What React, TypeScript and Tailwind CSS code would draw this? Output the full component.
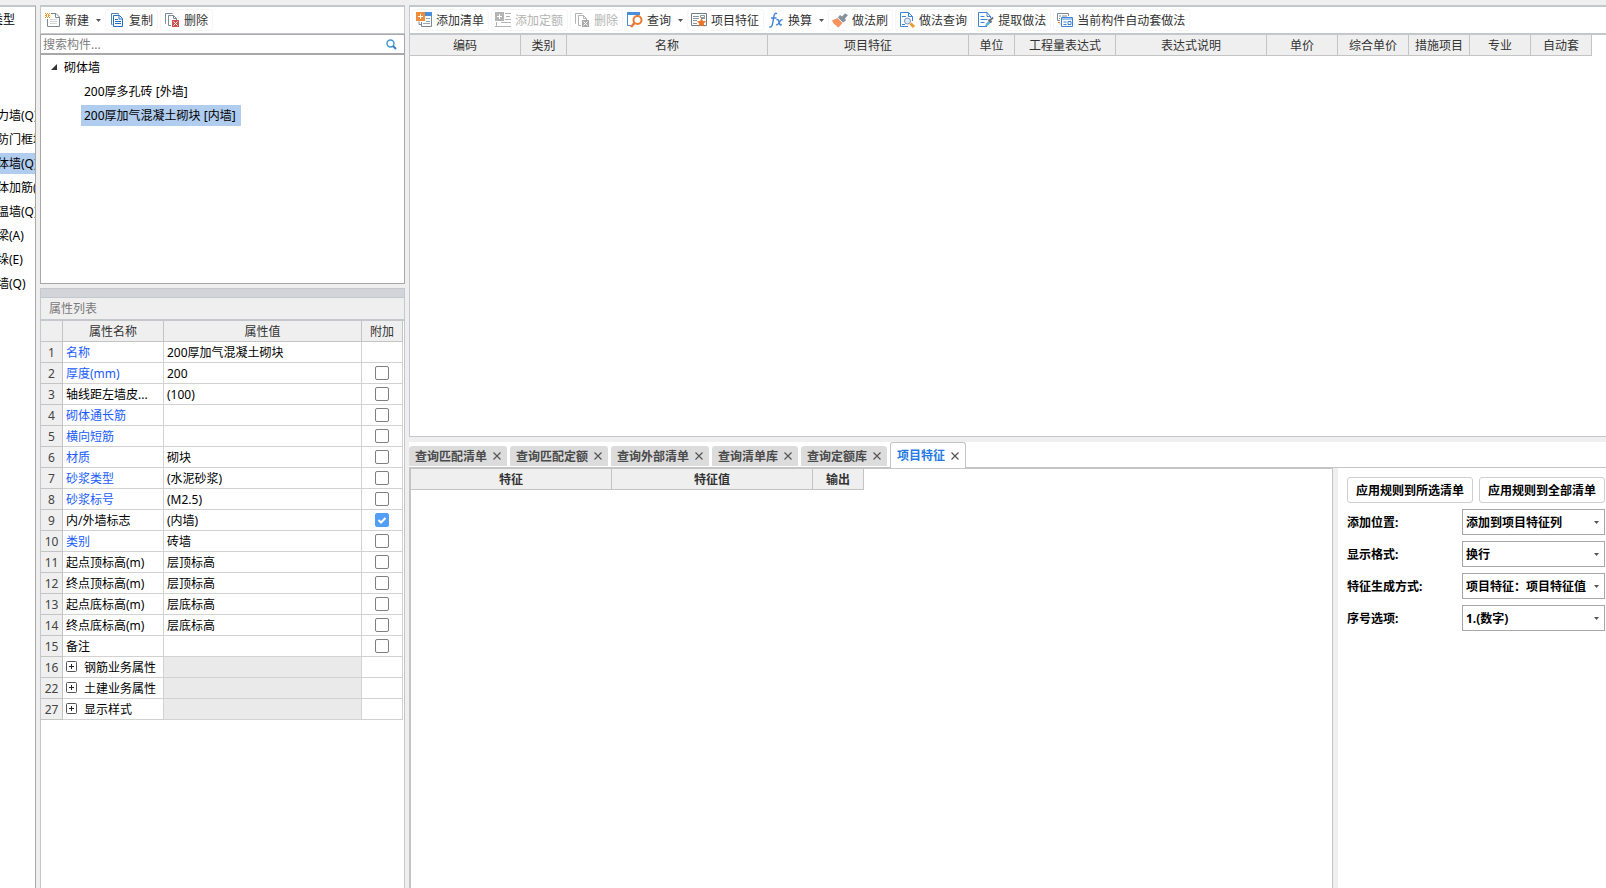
import { useState, type ReactNode } from "react";

const componentTypes = [
  "剪力墙(Q)",
  "人防门框墙(RF)",
  "砌体墙(Q)",
  "砌体加筋(Y)",
  "保温墙(Q)",
  "暗梁(A)",
  "墙垛(E)",
  "幕墙(Q)",
];

type Property = {
  no: number;
  name: string;
  value?: string;
  blue?: boolean;
  group?: boolean;
};

const properties: Property[] = [
  { no: 1, name: "名称", value: "200厚加气混凝土砌块", blue: true },
  { no: 2, name: "厚度(mm)", value: "200", blue: true },
  { no: 3, name: "轴线距左墙皮...", value: "(100)" },
  { no: 4, name: "砌体通长筋", blue: true },
  { no: 5, name: "横向短筋", blue: true },
  { no: 6, name: "材质", value: "砌块", blue: true },
  { no: 7, name: "砂浆类型", value: "(水泥砂浆)", blue: true },
  { no: 8, name: "砂浆标号", value: "(M2.5)", blue: true },
  { no: 9, name: "内/外墙标志", value: "(内墙)" },
  { no: 10, name: "类别", value: "砖墙", blue: true },
  { no: 11, name: "起点顶标高(m)", value: "层顶标高" },
  { no: 12, name: "终点顶标高(m)", value: "层顶标高" },
  { no: 13, name: "起点底标高(m)", value: "层底标高" },
  { no: 14, name: "终点底标高(m)", value: "层底标高" },
  { no: 15, name: "备注" },
  { no: 16, name: "钢筋业务属性", group: true },
  { no: 22, name: "土建业务属性", group: true },
  { no: 27, name: "显示样式", group: true },
];

const listColumns = [
  { title: "编码", width: "w-[111px]" },
  { title: "类别", width: "w-[46px]" },
  { title: "名称", width: "w-[201px]" },
  { title: "项目特征", width: "w-[201px]" },
  { title: "单位", width: "w-[46px]" },
  { title: "工程量表达式", width: "w-[101px]" },
  { title: "表达式说明", width: "w-[151px]" },
  { title: "单价", width: "w-[71px]" },
  { title: "综合单价", width: "w-[71px]" },
  { title: "措施项目", width: "w-[61px]" },
  { title: "专业", width: "w-[61px]" },
  { title: "自动套", width: "w-[61px]" },
];

const tabs = ["查询匹配清单", "查询匹配定额", "查询外部清单", "查询清单库", "查询定额库", "项目特征"];

const options = [
  { id: "position", label: "添加位置:", value: "添加到项目特征列" },
  { id: "format", label: "显示格式:", value: "换行" },
  { id: "mode", label: "特征生成方式:", value: "项目特征：项目特征值" },
  { id: "serial", label: "序号选项:", value: "1.(数字)" },
];

function Icon({ children }: { children: ReactNode }) {
  return (
    <svg className="h-4 w-4 shrink-0" viewBox="0 0 16 16" fill="none" aria-hidden="true">
      {children}
    </svg>
  );
}

function NewIcon() {
  return (
    <Icon>
      <path d="M6 1.500h5l3.500 3.500v9.500h-12V7" stroke="#7d8a94" />
      <path d="M10.500 1.500V5.500h4" stroke="#7d8a94" />
      <path d="M5 7.500h7M5 9.500h7M5 11.500h7" stroke="#cfd4d8" />
      <path d="M0 1h1v1H0zM2 1h1v1H2zM4 1h1v1H4zM1 2h1v1H1zM3 2h1v1H3zM0 3h2v1H0zM3 3h2v1H3zM1 4h1v1H1zM3 4h1v1H3zM0 5h1v1H0zM2 5h1v1H2zM4 5h1v1H4z" fill="#f0962e" />
    </Icon>
  );
}

function CopyIcon() {
  return (
    <Icon>
      <path d="M3.500 12.500H2.500V1.500H9.500V2.500" stroke="#5b7fa8" />
      <path d="M4.500 3.500H10.500L13.500 6.500V14.500H4.500Z" stroke="#2273c8" />
      <path d="M10 3.500V7H13.500" stroke="#2273c8" />
      <path d="M6 7.500h3M6 9.500h6M6 11.500h6" stroke="#2273c8" />
    </Icon>
  );
}

function DeleteIcon({ muted }: { muted?: boolean }) {
  const line = muted ? "#b4b4b4" : "#7d8a94";
  return (
    <Icon>
      <path d="M2 11.500H1.500V1.500H8.500" stroke={line} />
      <path d="M7 13.500H4.500V3.500H9.500L12.500 6.500V8" stroke={line} />
      <path d="M9.500 3.500V6.500H12.500" stroke={line} />
      <path d="M8 8h7v7H8z" fill={muted ? "#aaaaaa" : "#d2504e"} />
      <path d="M9.500 9.500l4 4M13.500 9.500l-4 4" stroke="#fff" />
    </Icon>
  );
}

function AddListIcon() {
  return (
    <Icon>
      <path d="M9 2.500h6.500v12H5.500V10" stroke="#7d8a94" />
      <path d="M3 9.500v3H5" stroke="#7d8a94" />
      <path d="M9 0h7v4H9z" fill="#4a8edb" />
      <path d="M10 6.500h4M10 9.500h4M7 11.500h7" stroke="#9aa6ae" />
      <path d="M0 0h9v9H0z" fill="#ec8d3c" />
      <path d="M4.500 2v5M2 4.500h5" stroke="#fff" />
    </Icon>
  );
}

function AddQuotaIcon() {
  return (
    <Icon>
      <path d="M10 1.500h6M11 4.500h4M10 7.500h6M6 10.500h10M0 14.500h16M1.500 10v4" stroke="#b4b4b4" />
      <path d="M0 0h9v9H0z" fill="#b4b4b4" />
      <path d="M4.500 2v5M2 4.500h5" stroke="#fff" />
    </Icon>
  );
}

function QueryIcon() {
  return (
    <Icon>
      <path d="M0.500 3v10.500H4" stroke="#4a8edb" />
      <path d="M0 0h13v3H0z" fill="#4a8edb" />
      <circle cx="10.500" cy="8" r="4" stroke="#ec7a33" strokeWidth="2" fill="#fff" />
      <path d="M7.500 11L4 15" stroke="#ec7a33" strokeWidth="2.500" />
    </Icon>
  );
}

function FeatureIcon() {
  return (
    <Icon>
      <path d="M0.500 1.500h15v12H0.500z" stroke="#6f7d87" />
      <path d="M2 4.500h6M2 6.500h6M2 8.500h4M2 11.500h4M10 6.500h4" stroke="#8b979f" />
      <path d="M9.500 3.500h4v2h-4z" stroke="#8b979f" />
      <path d="M10.500 6l1.400 2.900 3.300.3-2.400 2.200.7 3.400-3-1.700-3 1.700.7-3.400-2.400-2.200 3.300-.3z" fill="#ec7428" />
    </Icon>
  );
}

function FormulaIcon() {
  return (
    <Icon>
      <path d="M9 1.600C7.200.6 6.300 2 6 3.800L4.500 12C4.200 14.200 3 15.500 1.200 14.700M3 6h5.500" stroke="#3f84d6" strokeWidth="1.400" />
      <path d="M8.500 8c1.500-1 2-.2 2.500 2s1.100 3.800 2.800 2.400M14.500 8c-1-.8-1.800 0-3 2.200S9.200 13.400 8 12.600" stroke="#3f84d6" strokeWidth="1.400" />
    </Icon>
  );
}

function BrushIcon() {
  return (
    <Icon>
      <path d="M0 8.500l5.500-2.500 5 5-4 4.500c-1.200-.5-2-1.200-2.600-2.200C2.300 12.300.8 10.800 0 8.500z" fill="#f6935f" />
      <path d="M6 5.500l2-2.500 2 1.500L13 1.500 16 3l-3 3.500 1 2L11 10.500z" fill="#85929b" />
    </Icon>
  );
}

function MethodQueryIcon() {
  return (
    <Icon>
      <path d="M9.500.5H1.500V14.500H9M9.500.5L13.500 4.500V9M9.500.5V4.500H13.500" stroke="#3f84d6" />
      <path d="M3 4.500h4M3 12.500h3" stroke="#3f84d6" />
      <circle cx="8.500" cy="9" r="3" stroke="#7b96b4" fill="#dcecfb" />
      <path d="M11.500 11.500l3.500 3.500" stroke="#ee9a2f" strokeWidth="3" />
    </Icon>
  );
}

function ExtractIcon() {
  return (
    <Icon>
      <path d="M9 14.500H.5V.5H9L12.500 4.500V6M9 .5V4.500H12.500" stroke="#3f84d6" />
      <path d="M2.500 4.500h4M2.500 7.500h7M2.500 10.500h4" stroke="#3f84d6" />
      <path d="M7 14.500l1-3 3.500-3.500 2 2-3.500 3.500z" fill="#63b1d8" />
      <path d="M10.500 7.500l3 3M12 8.500L15 5.500" stroke="#66737d" strokeWidth="1.800" />
    </Icon>
  );
}

function AutoIcon() {
  return (
    <Icon>
      <path d="M3 8.500H.5V1.500H11.500V4M2 4h2M5 4h5M2 6.500h1" stroke="#7d8a94" />
      <path d="M1 10.500h2M2.500 12h1" stroke="#ec7a33" />
      <path d="M4.500 5.500h11v9h-11z" stroke="#3f84d6" fill="#fff" />
      <path d="M5 6h10v2H5z" fill="#9dc4ef" />
      <path d="M6.500 10h3M6.500 12.500h3M11 9.500h3v3h-3z" stroke="#3f84d6" />
    </Icon>
  );
}

function DownArrow() {
  return (
    <svg className="h-[3px] w-[5px] shrink-0" viewBox="0 0 5 3" aria-hidden="true">
      <path d="M0 0h5L2.500 3z" fill="#555" />
    </svg>
  );
}

type ToolProps = {
  icon: ReactNode;
  label: string;
  disabled?: boolean;
  menu?: boolean;
};

function Tool({ icon, label, disabled, menu }: ToolProps) {
  return (
    <button
      type="button"
      disabled={disabled}
      className={
        "flex h-[22px] shrink-0 items-center gap-1 whitespace-nowrap rounded-[3px] border leading-[18px] " +
        (menu ? "border-transparent pl-px pr-px " : "border-[#f6f6f6] pl-[3px] pr-1 ") +
        (disabled ? "text-[#b4b4b4]" : "text-[#333]")
      }
    >
      {icon}
      <span className="pt-0.5">{label}</span>
      {menu && (
        <span className="pl-[3px]">
          <DownArrow />
        </span>
      )}
    </button>
  );
}

function TypeList() {
  return (
    <nav className="w-9 shrink-0 overflow-hidden border-r border-t-2 border-r-[#a8a8a8] border-t-[#c4c8cc] bg-white">
      <div className="-ml-[15px] w-28 whitespace-nowrap">
        <h2 className="mb-[71px] h-[26px] pl-1.5 leading-[26px]">类型</h2>
        <ul>
          {componentTypes.map((type) => (
            <li key={type} className="h-6 pt-px">
              <a
                href="#"
                className={"block h-[21px] leading-[21px] " + (type === "砌体墙(Q)" ? "bg-[#b0ccee]" : "")}
              >
                {type}
              </a>
            </li>
          ))}
        </ul>
      </div>
    </nav>
  );
}

function ComponentTree() {
  return (
    <section className="flex flex-col">
      <div className="flex h-[27px] items-center gap-[2px] border-x border-b border-[#c4c8cc] bg-white pl-[2px]">
        <Tool icon={<NewIcon />} label="新建" menu />
        <Tool icon={<CopyIcon />} label="复制" />
        <Tool icon={<DeleteIcon />} label="删除" />
      </div>
      <div className="flex h-5 items-center border border-[#a8a8a8] bg-white pr-[7px]">
        <input
          type="text"
          aria-label="搜索构件"
          placeholder="搜索构件..."
          className="h-[18px] min-w-0 flex-1 pl-0.5 outline-none placeholder:text-[#808080]"
        />
        <button type="button" aria-label="搜索">
          <svg className="h-[11px] w-[11px]" viewBox="0 0 11 11" fill="none">
            <circle cx="4.500" cy="4.500" r="3.500" stroke="#3a97cf" strokeWidth="1.400" />
            <path d="M7 7l3 3" stroke="#3a7fbf" strokeWidth="2" />
          </svg>
        </button>
      </div>
      <div className="h-[230px] border border-[#a8a8a8] bg-white pt-px leading-[21px]">
        <div className="mb-0.5 flex h-[22px] items-center pl-[10px]">
          <svg className="h-[6px] w-[6px]" viewBox="0 0 6 6" aria-hidden="true">
            <path d="M6 0v6H0z" fill="#333" />
          </svg>
          <span className="pl-[7px]">砌体墙</span>
        </div>
        <ul className="pl-10">
          <li className="h-6 pt-px">
            <button type="button" className="h-[21px] pl-[3px] pr-[5px]">200厚多孔砖 [外墙]</button>
          </li>
          <li className="h-6 pt-px">
            <button type="button" className="h-[21px] bg-[#b0ccee] pl-[3px] pr-[5px]">200厚加气混凝土砌块 [内墙]</button>
          </li>
        </ul>
      </div>
    </section>
  );
}

function PropertyTable() {
  const [checked, setChecked] = useState<number[]>([9]);

  const toggle = (no: number) => {
    setChecked(checked.includes(no) ? checked.filter((n) => n !== no) : [...checked, no]);
  };

  const head = "h-[21px] border-b border-r border-[#c4c4c4] bg-[#efefef] p-0 pt-0.5 font-normal text-[#333]";
  const cell = "h-[21px] border-b border-r border-[#d2d2d2] p-0 pl-[3px] pt-0.5";

  return (
    <section className="mt-1 flex flex-1 flex-col border-x border-[#c4c8cc] bg-white">
      <div className="h-[10px] border-y border-[#c4c8cc] bg-[#d2d4da]" />
      <h2 className="h-[23px] border-b-2 border-[#c4c8cc] bg-[#efefef] pl-2 leading-[21px] text-[#7a7a7a]">
        属性列表
      </h2>
      <div className="flex-1">
        <table className="w-[362px] table-fixed border-separate border-spacing-0 leading-[18px]">
          <thead>
            <tr>
              <th className={head + " w-[22px]"} />
              <th className={head + " w-[101px]"}>属性名称</th>
              <th className={head + " w-[198px]"}>属性值</th>
              <th className={head + " w-[41px]"}>附加</th>
            </tr>
          </thead>
          <tbody>
            {properties.map((p) => (
              <tr key={p.no}>
                <td className="h-[21px] border-b border-r border-[#c4c4c4] bg-[#efefef] p-0 pt-0.5 text-center text-[#444]">
                  {p.no}
                </td>
                <td className={cell + (p.blue ? " text-[#1a5cff]" : "")}>
                  {p.group ? (
                    <button type="button" className="flex h-[18px] items-start gap-[7px]">
                      <svg className="mt-0.5 h-[11px] w-[11px]" viewBox="0 0 11 11" fill="none" aria-hidden="true">
                        <rect x="0.500" y="0.500" width="10" height="10" rx="1" stroke="#555" />
                        <path d="M3 5.500h5M5.500 3v5" stroke="#222" />
                      </svg>
                      {p.name}
                    </button>
                  ) : (
                    p.name
                  )}
                </td>
                <td className={cell + (p.group ? " bg-[#eaeaea]" : "")}>{p.value}</td>
                <td className="h-[21px] border-b border-r border-[#d2d2d2] p-0">
                  {p.no > 1 && !p.group && (
                    <label className="grid place-items-center">
                      <input
                        type="checkbox"
                        aria-label={p.name}
                        checked={checked.includes(p.no)}
                        onChange={() => toggle(p.no)}
                        className="peer col-start-1 row-start-1 h-[14px] w-[14px] appearance-none rounded-[2px] border border-[#7f7f7f] bg-white checked:border-[#539ff7] checked:bg-[#539ff7]"
                      />
                      <svg
                        className="col-start-1 row-start-1 hidden h-[14px] w-[14px] peer-checked:block"
                        viewBox="0 0 14 14"
                        fill="none"
                      >
                        <path d="M3.500 7l2.500 2.500L10.500 5" stroke="#fff" strokeWidth="2" />
                      </svg>
                    </label>
                  )}
                </td>
              </tr>
            ))}
          </tbody>
        </table>
      </div>
    </section>
  );
}

function BillPanel() {
  return (
    <section className="flex h-[432px] shrink-0 flex-col overflow-hidden border-b border-l border-t-2 border-[#c4c8cc] bg-white">
      <div className="flex h-7 shrink-0 items-center gap-[2px] border-b-2 border-[#c4c8cc] pl-[2px]">
        <Tool icon={<AddListIcon />} label="添加清单" />
        <Tool icon={<AddQuotaIcon />} label="添加定额" disabled />
        <Tool icon={<DeleteIcon muted />} label="删除" disabled />
        <Tool icon={<QueryIcon />} label="查询" menu />
        <Tool icon={<FeatureIcon />} label="项目特征" />
        <Tool icon={<FormulaIcon />} label="换算" menu />
        <Tool icon={<BrushIcon />} label="做法刷" />
        <Tool icon={<MethodQueryIcon />} label="做法查询" />
        <Tool icon={<ExtractIcon />} label="提取做法" />
        <Tool icon={<AutoIcon />} label="当前构件自动套做法" />
      </div>
      <div>
        <table className="w-[1182px] table-fixed border-separate border-spacing-0 leading-[18px]">
          <thead>
            <tr>
              {listColumns.map((c) => (
                <th
                  key={c.title}
                  className={"h-[21px] border-b border-r border-[#c4c4c4] bg-[#efefef] p-0 pt-0.5 font-normal text-[#333] " + c.width}
                >
                  {c.title}
                </th>
              ))}
            </tr>
          </thead>
        </table>
      </div>
    </section>
  );
}

function QueryTabs() {
  const [active, setActive] = useState("项目特征");

  return (
    <div className="flex h-[26px] shrink-0 items-end gap-[3px] border-b border-[#c4c4c4] bg-white font-bold">
      {tabs.map((tab) => (
        <div
          key={tab}
          className={
            active === tab
              ? "-mb-px flex h-[26px] items-center gap-1.5 rounded-t-[3px] border border-b-0 border-[#c4c4c4] bg-white px-1.5 text-[#1f7ae6]"
              : "mb-px flex h-5 items-center gap-1.5 rounded-t-[3px] bg-[#dcdcdc] px-1.5 text-[#4a4a4a]"
          }
        >
          <button
            type="button"
            className={"leading-[18px] " + (active === tab ? "" : "pt-0.5")}
            onClick={() => setActive(tab)}
          >
            {tab}
          </button>
          <button type="button" aria-label={"关闭" + tab}>
            <svg className="h-2 w-2" viewBox="0 0 8 8" fill="none">
              <path d="M0.500 0.500l7 7M7.500 0.500l-7 7" stroke="#555" strokeWidth="1.200" />
            </svg>
          </button>
        </div>
      ))}
    </div>
  );
}

function FeaturePanel() {
  const head = "h-[21px] border-b border-r border-[#c4c4c4] bg-[#efefef] p-0 pt-0.5 font-bold text-[#333]";
  const apply = "h-[26px] flex-1 whitespace-nowrap rounded-[3px] border border-[#cfcfcf] pt-0.5";

  return (
    <div className="flex flex-1">
      <div className="flex-1 border-l-2 border-r border-t border-[#c4c4c4] bg-white">
        <table className="w-[453px] table-fixed border-separate border-spacing-0 leading-[18px]">
          <thead>
            <tr>
              <th className={head + " w-[201px]"}>特征</th>
              <th className={head + " w-[201px]"}>特征值</th>
              <th className={head + " w-[51px]"}>输出</th>
            </tr>
          </thead>
        </table>
      </div>
      <form className="ml-[5px] w-[268px] shrink-0 bg-white pl-[9px] pr-px pt-[9px] font-bold">
        <div className="mb-1.5 flex gap-1.5">
          <button type="button" className={apply}>
            应用规则到所选清单
          </button>
          <button type="button" className={apply}>
            应用规则到全部清单
          </button>
        </div>
        {options.map((o) => (
          <div key={o.id} className="mb-1.5 flex items-center">
            <label htmlFor={o.id} className="w-[115px] shrink-0 pt-0.5">
              {o.label}
            </label>
            <div className="grid flex-1 items-center">
              <select
                id={o.id}
                className="col-start-1 row-start-1 h-[26px] w-full appearance-none border border-[#a8a8a8] bg-white pl-[3px] pt-0.5"
              >
                <option>{o.value}</option>
              </select>
              <span className="pointer-events-none col-start-1 row-start-1 flex justify-end pr-1.5">
                <DownArrow />
              </span>
            </div>
          </div>
        ))}
      </form>
    </div>
  );
}

export default function App() {
  return (
    <div className="flex min-h-screen flex-col overflow-hidden bg-[#efefef] pt-[5px] font-['Noto_Sans','Noto_Sans_CJK_SC',sans-serif] text-xs text-black">
      <div className="flex flex-1">
        <TypeList />
        <aside className="ml-1 flex w-[365px] shrink-0 flex-col border-t-2 border-[#c4c8cc]">
          <ComponentTree />
          <PropertyTable />
        </aside>
        <main className="ml-1 flex min-w-0 flex-1 flex-col">
          <BillPanel />
          <section className="mt-[5px] flex flex-1 flex-col">
            <QueryTabs />
            <FeaturePanel />
          </section>
        </main>
      </div>
    </div>
  );
}
